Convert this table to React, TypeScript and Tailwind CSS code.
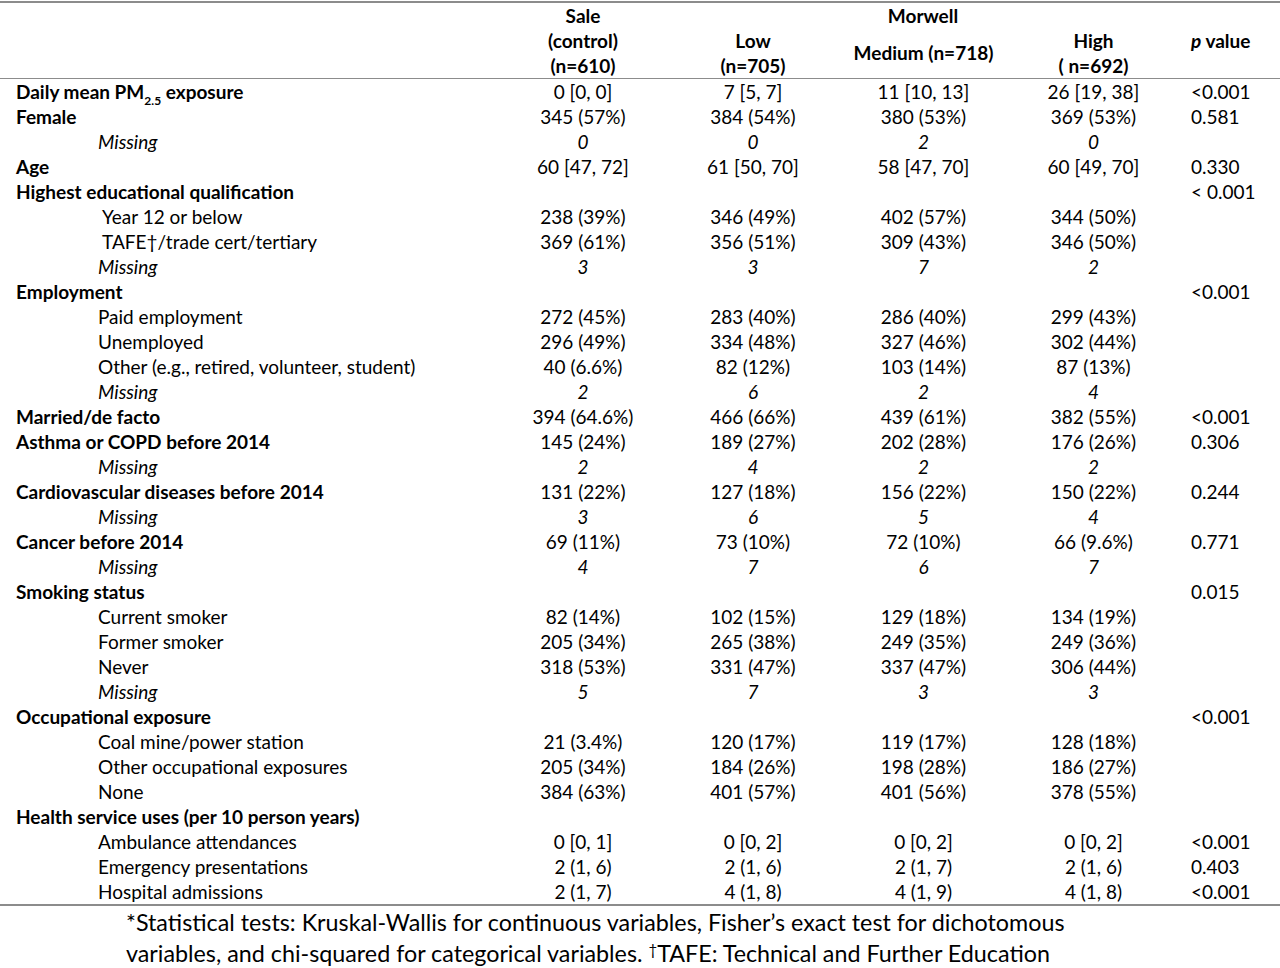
import React from "react"

type Kind = "h" | "s" | "m"

type Row = {
	label: React.ReactNode
	kind: Kind
	vals?: string[]
	p?: string
	wide?: boolean
}

const rows: Row[] = [
	{
		label: (
			<>
				Daily mean PM<sub className="text-[12px] align-[-3px]">2.5</sub> exposure
			</>
		),
		kind: "h",
		vals: ["0 [0, 0]", "7 [5, 7]", "11 [10, 13]", "26 [19, 38]"],
		p: "<0.001",
	},
	{ label: "Female", kind: "h", vals: ["345 (57%)", "384 (54%)", "380 (53%)", "369 (53%)"], p: "0.581" },
	{ label: "Missing", kind: "m", vals: ["0", "0", "2", "0"] },
	{ label: "Age", kind: "h", vals: ["60 [47, 72]", "61 [50, 70]", "58 [47, 70]", "60 [49, 70]"], p: "0.330" },
	{ label: "Highest educational qualification", kind: "h", p: "< 0.001" },
	{ label: "Year 12 or below", kind: "s", wide: true, vals: ["238 (39%)", "346 (49%)", "402 (57%)", "344 (50%)"] },
	{ label: "TAFE†/trade cert/tertiary", kind: "s", wide: true, vals: ["369 (61%)", "356 (51%)", "309 (43%)", "346 (50%)"] },
	{ label: "Missing", kind: "m", vals: ["3", "3", "7", "2"] },
	{ label: "Employment", kind: "h", p: "<0.001" },
	{ label: "Paid employment", kind: "s", vals: ["272 (45%)", "283 (40%)", "286 (40%)", "299 (43%)"] },
	{ label: "Unemployed", kind: "s", vals: ["296 (49%)", "334 (48%)", "327 (46%)", "302 (44%)"] },
	{ label: "Other (e.g., retired, volunteer, student)", kind: "s", vals: ["40 (6.6%)", "82 (12%)", "103 (14%)", "87 (13%)"] },
	{ label: "Missing", kind: "m", vals: ["2", "6", "2", "4"] },
	{ label: "Married/de facto", kind: "h", vals: ["394 (64.6%)", "466 (66%)", "439 (61%)", "382 (55%)"], p: "<0.001" },
	{ label: "Asthma or COPD before 2014", kind: "h", vals: ["145 (24%)", "189 (27%)", "202 (28%)", "176 (26%)"], p: "0.306" },
	{ label: "Missing", kind: "m", vals: ["2", "4", "2", "2"] },
	{ label: "Cardiovascular diseases before 2014", kind: "h", vals: ["131 (22%)", "127 (18%)", "156 (22%)", "150 (22%)"], p: "0.244" },
	{ label: "Missing", kind: "m", vals: ["3", "6", "5", "4"] },
	{ label: "Cancer before 2014", kind: "h", vals: ["69 (11%)", "73 (10%)", "72 (10%)", "66 (9.6%)"], p: "0.771" },
	{ label: "Missing", kind: "m", vals: ["4", "7", "6", "7"] },
	{ label: "Smoking status", kind: "h", p: "0.015" },
	{ label: "Current smoker", kind: "s", vals: ["82 (14%)", "102 (15%)", "129 (18%)", "134 (19%)"] },
	{ label: "Former smoker", kind: "s", vals: ["205 (34%)", "265 (38%)", "249 (35%)", "249 (36%)"] },
	{ label: "Never", kind: "s", vals: ["318 (53%)", "331 (47%)", "337 (47%)", "306 (44%)"] },
	{ label: "Missing", kind: "m", vals: ["5", "7", "3", "3"] },
	{ label: "Occupational exposure", kind: "h", p: "<0.001" },
	{ label: "Coal mine/power station", kind: "s", vals: ["21 (3.4%)", "120 (17%)", "119 (17%)", "128 (18%)"] },
	{ label: "Other occupational exposures", kind: "s", vals: ["205 (34%)", "184 (26%)", "198 (28%)", "186 (27%)"] },
	{ label: "None", kind: "s", vals: ["384 (63%)", "401 (57%)", "401 (56%)", "378 (55%)"] },
	{ label: "Health service uses (per 10 person years)", kind: "h" },
	{ label: "Ambulance attendances", kind: "s", vals: ["0 [0, 1]", "0 [0, 2]", "0 [0, 2]", "0 [0, 2]"], p: "<0.001" },
	{ label: "Emergency presentations", kind: "s", vals: ["2 (1, 6)", "2 (1, 6)", "2 (1, 7)", "2 (1, 6)"], p: "0.403" },
	{ label: "Hospital admissions", kind: "s", vals: ["2 (1, 7)", "4 (1, 8)", "4 (1, 9)", "4 (1, 8)"], p: "<0.001" },
]

const cols = "grid grid-cols-[498px_170px_170px_171px_169px_102px]"

function BodyRow({ row }: { row: Row }) {
	const labelClass =
		row.kind === "h"
			? "pl-4 font-bold"
			: row.kind === "m"
				? "pl-[98px] italic"
				: row.wide
					? "pl-[102px]"
					: "pl-[98px]"

	return (
		<div className={`${cols} h-[25px] items-center leading-[25px]`}>
			<div className={`${labelClass} whitespace-nowrap`}>{row.label}</div>
			{[0, 1, 2, 3].map((i) => (
				<div key={i} className={`text-center whitespace-nowrap ${row.kind === "m" ? "italic" : ""}`}>
					{row.vals ? row.vals[i] : ""}
				</div>
			))}
			<div className="pl-[13px] whitespace-nowrap">{row.p ?? ""}</div>
		</div>
	)
}

export default function App() {
	return (
		<div className="w-[1280px] h-[968px] bg-white text-black font-['Lato','Open_Sans',sans-serif] text-[19px] overflow-hidden pt-[1px]">
			<div className="h-[2px] bg-[#8c8c8c]" />

			<div className={`${cols} grid-rows-[25px_25px_25px] font-bold leading-[25px]`}>
				<div className="col-start-2 row-start-1 text-center">Sale</div>
				<div className="col-start-3 col-span-3 row-start-1 text-center">Morwell</div>
				<div className="col-start-2 row-start-2 text-center">(control)</div>
				<div className="col-start-3 row-start-2 text-center">Low</div>
				<div className="col-start-4 row-start-2 row-span-2 flex items-center justify-center pb-[2px]">Medium (n=718)</div>
				<div className="col-start-5 row-start-2 text-center">High</div>
				<div className="col-start-6 row-start-2 pl-[13px] whitespace-nowrap">
					<span className="italic">p</span> value
				</div>
				<div className="col-start-2 row-start-3 text-center">(n=610)</div>
				<div className="col-start-3 row-start-3 text-center">(n=705)</div>
				<div className="col-start-5 row-start-3 text-center">( n=692)</div>
			</div>

			<div className="h-[1px] bg-[#8c8c8c]" />

			<div className="flex flex-col">
				{rows.map((r, i) => (
					<BodyRow key={i} row={r} />
				))}
			</div>

			<div className="h-[2px] bg-[#8c8c8c]" />

			<div className="pl-[126px] pt-[1px] text-[23.3px] leading-[31px]">
				<p className="whitespace-nowrap">*Statistical tests: Kruskal-Wallis for continuous variables, Fisher’s exact test for dichotomous</p>
				<p className="whitespace-nowrap">
					variables, and chi-squared for categorical variables. <sup className="text-[15px]">†</sup>TAFE: Technical and Further Education
				</p>
			</div>
		</div>
	)
}
